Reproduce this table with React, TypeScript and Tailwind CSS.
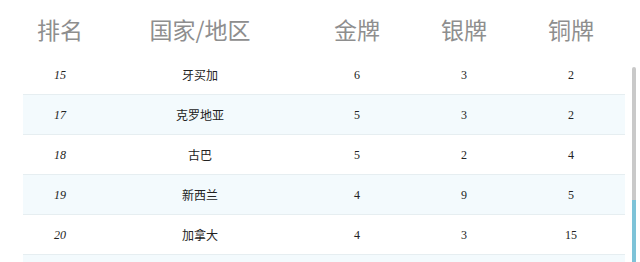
const rows = [
  { rank: '15', name: '牙买加', gold: 6, silver: 3, bronze: 2 },
  { rank: '17', name: '克罗地亚', gold: 5, silver: 3, bronze: 2 },
  { rank: '18', name: '古巴', gold: 5, silver: 2, bronze: 4 },
  { rank: '19', name: '新西兰', gold: 4, silver: 9, bronze: 5 },
  { rank: '20', name: '加拿大', gold: 4, silver: 3, bronze: 15 },
  { rank: '', name: '', gold: '', silver: '', bronze: '' },
];

const cols = 'grid grid-cols-[74px_206px_108px_106px_108px]';

export default function App() {
  return (
    <div className="w-[640px] h-[262px] overflow-hidden bg-white relative font-['Liberation_Serif','Noto_Sans_CJK_SC',serif]">
      <div className={`${cols} ml-[23px] h-[55px] items-center pt-[4px] text-[23px] text-[#8e8e8e] font-['Noto_Sans_CJK_SC',sans-serif]`}>
        <div className="text-center">排名</div>
        <div className="text-center">国家/地区</div>
        <div className="text-center">金牌</div>
        <div className="text-center">银牌</div>
        <div className="text-center">铜牌</div>
      </div>
      <div className="ml-[23px] w-[602px]">
        {rows.map((r, i) => (
          <div
            key={i}
            className={`${cols} h-[40px] items-center border-b border-[#e6eef1] text-[12px] text-[#222] ${i % 2 === 1 ? 'bg-[#f3fafd]' : 'bg-white'}`}
          >
            <div className="text-center italic text-[12px]">{r.rank}</div>
            <div className="text-center font-['Noto_Sans_CJK_SC',sans-serif]">{r.name}</div>
            <div className="text-center">{r.gold}</div>
            <div className="text-center">{r.silver}</div>
            <div className="text-center">{r.bronze}</div>
          </div>
        ))}
      </div>
      <div className="absolute left-[632px] top-[67px] w-[4px] h-[195px] rounded-t-full bg-[#c9c9c9] flex flex-col">
        <div className="mt-auto h-[62px] bg-[#7ec3d8]" />
      </div>
    </div>
  );
}
